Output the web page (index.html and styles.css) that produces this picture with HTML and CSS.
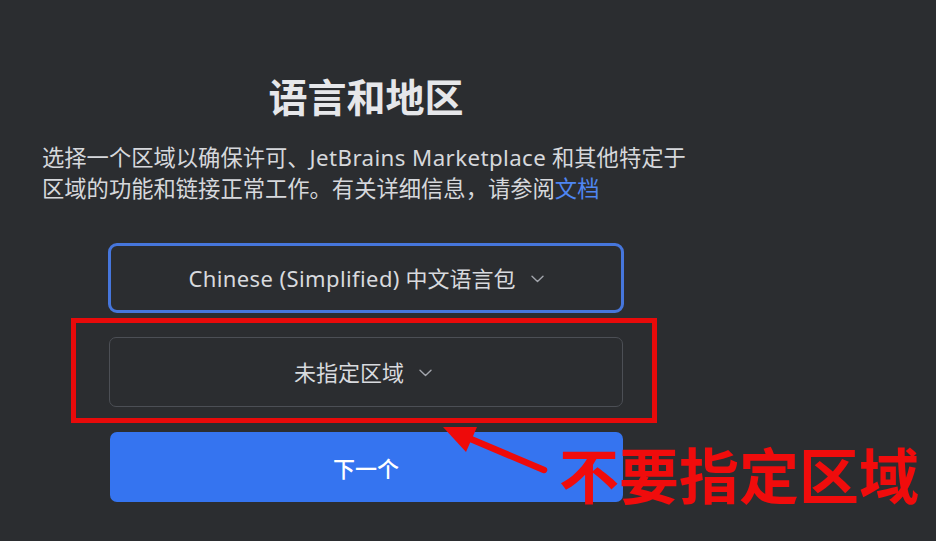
FILE: index.html
```html
<!DOCTYPE html>
<html lang="zh-CN">
<head>
<meta charset="utf-8">
<title>语言和地区</title>
<link rel="stylesheet" href="styles.css">
</head>
<body>
<main class="page">
  <h1 class="title">语言和地区</h1>
  <p class="desc">选择一个区域以确保许可、<span class="latin">JetBrains Marketplace</span> 和其他特定于<br>区域的功能和链接正常工作。有关详细信息，请参阅<a class="link" href="#">文档</a></p>
  <div class="controls">
    <div class="select select-focused">
      <span class="select-label"><span class="latin">Chinese (Simplified)</span> 中文语言包</span>
      <svg class="chev" viewBox="0 0 13 8" width="13" height="8"><path d="M1 1.2 L6.5 6.4 L12 1.2" fill="none" stroke="currentColor" stroke-width="1.4" stroke-linecap="round" stroke-linejoin="round"/></svg>
    </div>
    <div class="select select-plain">
      <span class="select-label">未指定区域</span>
      <svg class="chev" viewBox="0 0 13 8" width="13" height="8"><path d="M1 1.2 L6.5 6.4 L12 1.2" fill="none" stroke="currentColor" stroke-width="1.4" stroke-linecap="round" stroke-linejoin="round"/></svg>
    </div>
    <button class="next" type="button">下一个</button>
  </div>
</main>

<div class="mark-box"></div>
<svg class="mark-arrow" width="936" height="541" viewBox="0 0 936 541">
  <line x1="544" y1="470" x2="466" y2="437" stroke="#ee0a0a" stroke-width="6.5" stroke-linecap="round"/>
  <polygon points="443,427 477,427 466,452" fill="#ee0a0a"/>
</svg>
<div class="mark-text">不要指定区域</div>
</body>
</html>
```
FILE: styles.css
```css
html, body {
  margin: 0;
  padding: 0;
}
body {
  width: 936px;
  height: 541px;
  overflow: hidden;
  background: #2b2d30;
  position: relative;
  font-family: "Noto Sans", "Noto Sans CJK SC", sans-serif;
  color: #dcdee2;
}
.page {
  width: 648px;
  margin-left: 42px;
  padding-top: 71px;
  display: flex;
  flex-direction: column;
}
.title {
  margin: 0;
  text-align: center;
  font-size: 39px;
  line-height: 48px;
  font-weight: 700;
  color: #e6e7ea;
  font-family: "Noto Sans CJK SC", sans-serif;
}
.desc {
  margin: 23px 0 0 0;
  font-size: 22.3px;
  line-height: 31px;
  white-space: nowrap;
  color: #d6d8dc;
}
.latin {
  letter-spacing: 0.4px;
}
.link {
  color: #4f86f2;
  text-decoration: none;
}
.controls {
  width: 516px;
  margin: 39px auto 0 auto;
  display: flex;
  flex-direction: column;
  align-items: center;
  gap: 24px;
}
.select {
  box-sizing: border-box;
  height: 70px;
  display: flex;
  align-items: center;
  justify-content: center;
  gap: 15px;
  font-size: 22px;
  color: #d8dade;
}
.select-focused {
  width: 516px;
  border: 3px solid #4676dc;
  border-radius: 9px;
}
.select-plain {
  width: 514px;
  border: 1px solid #4c4f55;
  border-radius: 7px;
  padding-right: 6px;
}
.select-label {
  line-height: 30px;
}
.chev {
  color: #a3a6ad;
  margin-top: 2px;
}
.next {
  box-sizing: border-box;
  width: 513px;
  height: 70px;
  margin-top: 1px;
  border: none;
  border-radius: 7px;
  background: #3574f0;
  color: #ffffff;
  font-family: "Noto Sans CJK SC", sans-serif;
  font-size: 22px;
  font-weight: 500;
}
.mark-box {
  position: absolute;
  left: 71px;
  top: 318px;
  width: 586px;
  height: 105px;
  box-sizing: border-box;
  border: 5px solid #e80a0a;
}
.mark-arrow {
  position: absolute;
  left: 0;
  top: 0;
}
.mark-text {
  position: absolute;
  left: 559px;
  top: 443px;
  font-family: "Noto Sans CJK SC", sans-serif;
  font-size: 60px;
  line-height: 60px;
  font-weight: 700;
  color: #f00c0c;
  white-space: nowrap;
}
```
